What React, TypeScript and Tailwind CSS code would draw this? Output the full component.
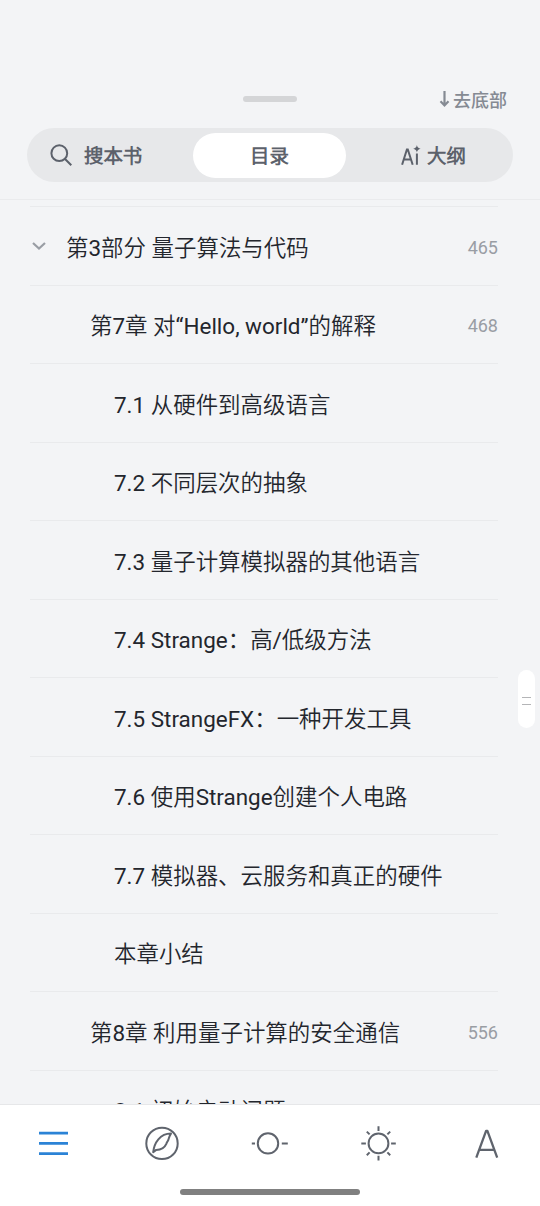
import clsx from 'clsx';
import { useState } from 'react';

interface TocItem {
  title: string;
  level: 0 | 1 | 2;
  page?: number;
}

const tocItems: TocItem[] = [
  { title: '第3部分 量子算法与代码', level: 0, page: 465 },
  { title: '第7章 对“Hello, world”的解释', level: 1, page: 468 },
  { title: '7.1 从硬件到高级语言', level: 2 },
  { title: '7.2 不同层次的抽象', level: 2 },
  { title: '7.3 量子计算模拟器的其他语言', level: 2 },
  { title: '7.4 Strange：高/低级方法', level: 2 },
  { title: '7.5 StrangeFX：一种开发工具', level: 2 },
  { title: '7.6 使用Strange创建个人电路', level: 2 },
  { title: '7.7 模拟器、云服务和真正的硬件', level: 2 },
  { title: '本章小结', level: 2 },
  { title: '第8章 利用量子计算的安全通信', level: 1, page: 556 },
  { title: '8.1 初始启动问题', level: 2 },
];

const indents = ['pl-[36px]', 'pl-[60px]', 'pl-[84px]'];

function SearchIcon() {
  return (
    <svg width="24" height="24" viewBox="0 0 24 24" fill="none" stroke="currentColor" strokeWidth="2">
      <circle cx="10.3" cy="10.2" r="7.9" />
      <path d="M15.8 15.7 22.3 22.2" />
    </svg>
  );
}

function AiIcon() {
  return (
    <svg width="22" height="24" viewBox="0 0 22 24" fill="none" stroke="currentColor" strokeWidth="2">
      <path d="M2.1 21.7 6.9 6.5h.9l4.9 15.2M3.9 16.5h7M16.9 10.5v11.2" />
      <path d="M16.9 2.1Q17.4 5.3 20.6 5.8 17.4 6.3 16.9 9.5 16.4 6.3 13.2 5.8 16.4 5.3 16.9 2.1Z" fill="currentColor" stroke="none" />
    </svg>
  );
}

function Header() {
  return (
    <header className="h-[200px] shrink-0 border-b border-[#eaebed] pt-[86px]">
      <div className="grid h-[26px] grid-cols-3 items-center px-[33px]">
        <span />
        <span className="h-[6px] w-[54px] justify-self-center rounded-full bg-[#d4d5d7]" />
        <button className="flex items-center gap-[3px] justify-self-end font-['Noto_Sans_CJK_SC',sans-serif] text-[18px] leading-none font-medium text-[#858a93]">
          <svg width="11" height="18" viewBox="0 0 11 18" fill="none" stroke="currentColor" strokeWidth="2.2">
            <path d="M5.5 1v14.5M1.5 11.2l4 4.2 4-4.2" />
          </svg>
          <span>去底部</span>
        </button>
      </div>
      <div className="mx-[27px] mt-[16px] grid h-[54px] grid-cols-[166px_153px_167px] items-center rounded-full bg-[#e7e8ea] text-[19.4px] leading-none font-bold text-[#5c616b]">
        <button className="flex items-center gap-[11px] pl-[22px]">
          <SearchIcon />
          <span className="pt-[3px]">搜本书</span>
        </button>
        <button className="flex h-[45px] items-center justify-center rounded-full bg-white">
          <span className="pt-[3px]">目录</span>
        </button>
        <button className="flex items-center gap-[5px] pl-[54px]">
          <AiIcon />
          <span className="pt-[3px]">大纲</span>
        </button>
      </div>
    </header>
  );
}

function TocRow({ item }: { item: TocItem }) {
  return (
    <li className={clsx('flex h-[78.5px] shrink-0 items-center border-b border-[#e9eaec]', indents[item.level])}>
      {item.level === 0 && (
        <svg className="mt-[2px] mr-[20px] -ml-[34px] h-[16px] w-[14px] text-[#999da4]" viewBox="0 0 14 16" fill="none" stroke="currentColor" strokeWidth="2.2">
          <path d="m1 4 6 5.5L13 4" />
        </svg>
      )}
      <span className="flex-1 pt-[5.5px] text-[22.46px] whitespace-nowrap text-[#23262d]">{item.title}</span>
      {item.page && <span className="pt-[3px] text-[18px] text-[#999da4]">{item.page}</span>}
    </li>
  );
}

const tabIcons = [
  {
    name: '目录',
    icon: <path d="M6 9.8h29M6 20h29M6 30.2h29" strokeWidth="2.8" />,
  },
  {
    name: '发现',
    icon: (
      <>
        <circle cx="20" cy="20" r="15.7" />
        <path d="M11.2 28.8C12.2 19.5 18 10.2 29 10.2c-2.2 3-1.8 4.4-2.8 6.7-1.1 2-1.3 1.9-1.9 3.6-1.8 4.2-5.1 6-10.1 6L11.2 28.8Z" />
      </>
    ),
  },
  {
    name: '进度',
    icon: (
      <>
        <circle cx="18" cy="20" r="10.2" />
        <path d="M1.8 20h3.2M31.8 20h6" />
      </>
    ),
  },
  {
    name: '亮度',
    icon: (
      <>
        <circle cx="19.5" cy="20" r="9.9" />
        <path d="M19.5 2.8v4.8M19.5 32.4v4.8M2.3 20h4.6M32.1 20h4.7M7.8 8.2l2.8 2.8M31.2 8.2 28.4 11M7.8 31.8l2.8-2.8M31.2 31.8 28.4 29" />
      </>
    ),
  },
  {
    name: '字体',
    icon: <path d="M9.3 34.3 19.1 7.5h1.3l9.8 26.8M12.4 26.5h14.7" strokeWidth="2.3" />,
  },
];

function BottomBar() {
  const [active, setActive] = useState(0);

  return (
    <footer className="flex h-[102px] shrink-0 flex-col items-center border-t border-[#e6e7e9] bg-white pt-[18px]">
      <nav className="flex w-full justify-between px-[33px]">
        {tabIcons.map((tab, i) => (
          <button key={tab.name} aria-label={tab.name} onClick={() => setActive(i)}>
            <svg
              width="40"
              height="40"
              viewBox="0 -0.4 40 40"
              fill="none"
              stroke="currentColor"
              strokeWidth="2"
              strokeLinejoin="round"
              className={i === active ? 'text-[#2b83d6]' : 'text-[#5f646d]'}
            >
              {tab.icon}
            </svg>
          </button>
        ))}
      </nav>
      <div className="mt-[26px] h-[6px] w-[180px] rounded-full bg-[#808080]" />
    </footer>
  );
}

export default function App() {
  return (
    <div className="relative flex h-[1206px] w-[540px] flex-col overflow-hidden bg-[#f3f4f6] font-[Roboto,'Noto_Sans_CJK_SC_DemiLight','Noto_Sans_CJK_SC',sans-serif]">
      <Header />
      <main className="min-h-0 flex-1 overflow-hidden pt-[6px] pr-[42px] pl-[30px]">
        <ul className="flex flex-col border-t border-[#e9eaec]">
          {tocItems.map(item => (
            <TocRow key={item.title} item={item} />
          ))}
        </ul>
      </main>
      <BottomBar />
      {/* scroll handle */}
      <div className="absolute top-[670px] right-[5px] flex h-[58px] w-[17px] flex-col items-center justify-center gap-[6px] rounded-full bg-white pt-[3px]">
        <span className="h-px w-[9px] bg-[#b4b5b7]" />
        <span className="h-px w-[9px] bg-[#b4b5b7]" />
      </div>
    </div>
  );
}
